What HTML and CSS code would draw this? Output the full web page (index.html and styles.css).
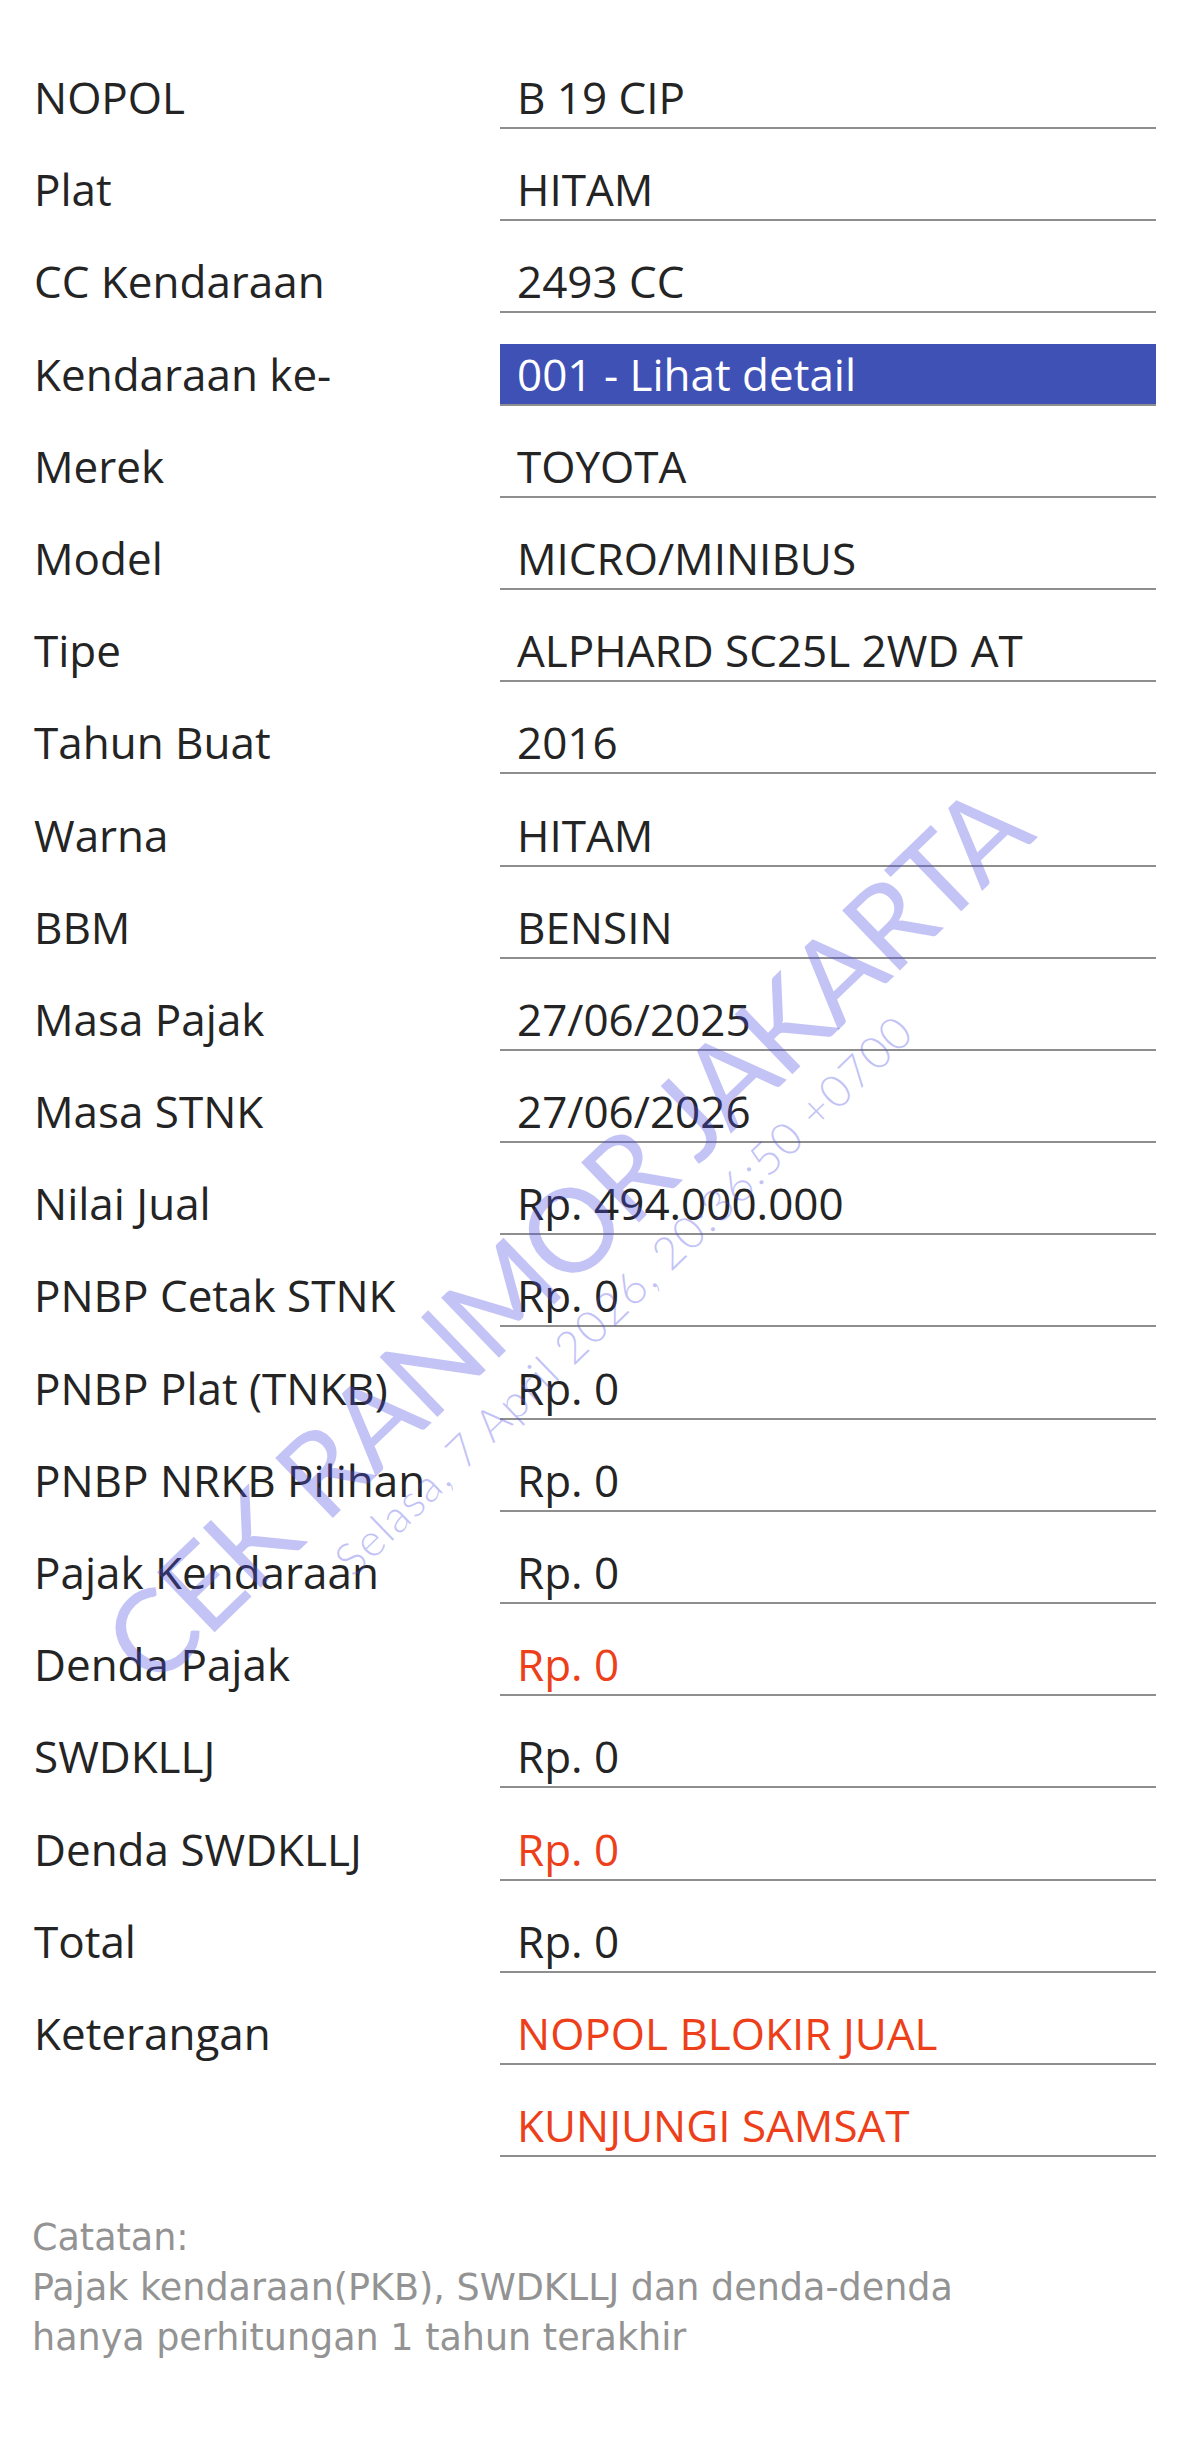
FILE: index.html
```html
<!DOCTYPE html>
<html lang="id">
<head>
<meta charset="utf-8">
<title>Cek Ranmor</title>
<link rel="stylesheet" href="styles.css">
</head>
<body>
<div class="page">
  <div class="table">
    <div class="row"><div class="label">NOPOL</div><div class="value">B 19 CIP</div></div>
    <div class="row"><div class="label">Plat</div><div class="value">HITAM</div></div>
    <div class="row"><div class="label">CC Kendaraan</div><div class="value">2493 CC</div></div>
    <div class="row"><div class="label">Kendaraan ke-</div><div class="value link">001 - Lihat detail</div></div>
    <div class="row"><div class="label">Merek</div><div class="value">TOYOTA</div></div>
    <div class="row"><div class="label">Model</div><div class="value">MICRO/MINIBUS</div></div>
    <div class="row"><div class="label">Tipe</div><div class="value">ALPHARD SC25L 2WD AT</div></div>
    <div class="row"><div class="label">Tahun Buat</div><div class="value">2016</div></div>
    <div class="row"><div class="label">Warna</div><div class="value">HITAM</div></div>
    <div class="row"><div class="label">BBM</div><div class="value">BENSIN</div></div>
    <div class="row"><div class="label">Masa Pajak</div><div class="value">27/06/2025</div></div>
    <div class="row"><div class="label">Masa STNK</div><div class="value">27/06/2026</div></div>
    <div class="row"><div class="label">Nilai Jual</div><div class="value">Rp. 494.000.000</div></div>
    <div class="row"><div class="label">PNBP Cetak STNK</div><div class="value">Rp. 0</div></div>
    <div class="row"><div class="label">PNBP Plat (TNKB)</div><div class="value">Rp. 0</div></div>
    <div class="row"><div class="label">PNBP NRKB Pilihan</div><div class="value">Rp. 0</div></div>
    <div class="row"><div class="label">Pajak Kendaraan</div><div class="value">Rp. 0</div></div>
    <div class="row"><div class="label">Denda Pajak</div><div class="value red">Rp. 0</div></div>
    <div class="row"><div class="label">SWDKLLJ</div><div class="value">Rp. 0</div></div>
    <div class="row"><div class="label">Denda SWDKLLJ</div><div class="value red">Rp. 0</div></div>
    <div class="row"><div class="label">Total</div><div class="value">Rp. 0</div></div>
    <div class="row"><div class="label">Keterangan</div><div class="value red">NOPOL BLOKIR JUAL</div></div>
    <div class="row"><div class="label"></div><div class="value red">KUNJUNGI SAMSAT</div></div>
  </div>
  <div class="notes">
    <div>Catatan:</div>
    <div>Pajak kendaraan(PKB), SWDKLLJ dan denda-denda</div>
    <div>hanya perhitungan 1 tahun terakhir</div>
  </div>
  <div class="watermark">
    <div class="wm-big">CEK RANMOR JAKARTA</div>
    <div class="wm-small">Selasa, 7 April 2026, 20:36:50 +0700</div>
  </div>
</div>
</body>
</html>
```

FILE: styles.css
```css
html, body {
  margin: 0;
  padding: 0;
  background: #ffffff;
}

.page {
  position: relative;
  width: 1200px;
  height: 2440px;
  overflow: hidden;
  font-family: "Open Sans", "Noto Sans", sans-serif;
}

.table {
  display: flex;
  flex-direction: column;
  gap: 30.2px;
  padding-top: 67px;
}

.row {
  display: flex;
  align-items: flex-start;
  height: 62px;
}

.label {
  width: 466px;
  padding-left: 34px;
  font-size: 44px;
  line-height: 60px;
  color: #242424;
  white-space: nowrap;
}

.value {
  width: 639px;
  height: 60px;
  padding-left: 17px;
  font-size: 44px;
  line-height: 60px;
  color: #242424;
  border-bottom: 2px solid #8e8e8e;
  white-space: nowrap;
}

.value.link {
  background: #3f51b5;
  color: #ffffff;
}

.value.red {
  color: #ec3f1a;
}

.notes {
  margin-top: 56px;
  padding-left: 32px;
  font-family: "DejaVu Sans", sans-serif;
  font-size: 36.5px;
  line-height: 50px;
  color: #939393;
}

.watermark {
  position: absolute;
  left: 585px;
  top: 1255px;
  transform: translate(-50%, -50%) rotate(-44deg);
  display: flex;
  flex-direction: column;
  align-items: center;
  gap: 10px;
  color: rgba(80, 80, 230, 0.34);
  font-family: "Lato", "Open Sans", sans-serif;
  font-weight: 400;
  white-space: nowrap;
  pointer-events: none;
}

.wm-big {
  font-size: 116px;
  line-height: 100px;
  letter-spacing: -3px;
}

.wm-small {
  font-size: 45px;
  line-height: 50px;
  letter-spacing: 1.5px;
  font-weight: 300;
}
```
